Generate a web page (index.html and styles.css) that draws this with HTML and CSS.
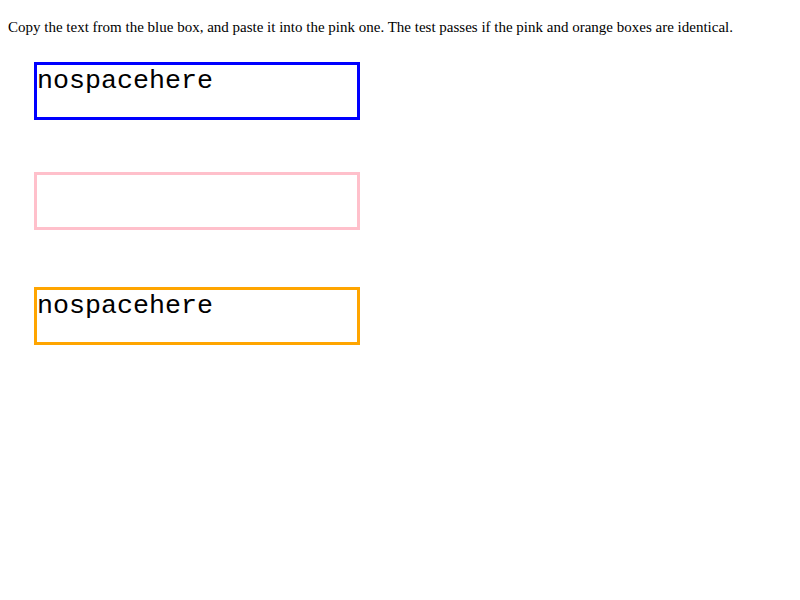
FILE: index.html
```html
<!DOCTYPE html>
<html>
<head>
<meta charset="utf-8">
<link rel="stylesheet" href="styles.css">
</head>
<body>
<p class="intro">Copy the text from the blue box, and paste it into the pink one. The test passes if the pink and orange boxes are identical.</p>
<div class="box blue">nospacehere</div>
<div class="box pink" contenteditable="true"></div>
<div class="box orange">nospacehere</div>
</body>
</html>
```

FILE: styles.css
```css
body {
  margin: 8px;
  font-family: "Liberation Serif", "Times New Roman", serif;
  background: #fff;
  color: #000;
}
.intro {
  font-size: 15px;
  line-height: 17px;
  margin: 11px 0 0 0;
}
.box {
  width: 320px;
  height: 52px;
  border: 3px solid;
  margin-left: 26px;
  font-family: "Liberation Mono", "Courier New", monospace;
  font-size: 26.67px;
  line-height: 33px;
  outline: none;
}
.blue {
  border-color: #0000ff;
  margin-top: 26px;
}
.pink {
  border-color: #ffc0cb;
  margin-top: 52px;
}
.orange {
  border-color: #ffa500;
  margin-top: 57px;
}
```
